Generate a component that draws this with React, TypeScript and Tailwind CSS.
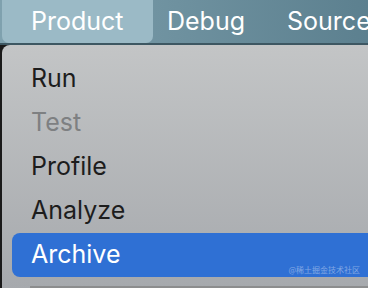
import React from 'react';

const items = [
  { label: 'Run', disabled: false },
  { label: 'Test', disabled: true },
  { label: 'Profile', disabled: false },
  { label: 'Analyze', disabled: false },
];

const App = () => {
  return (
    <div
      className="w-[368px] h-[288px] overflow-hidden bg-[#1a1a1a] flex flex-col"
      style={{ fontFamily: 'Inter, "Noto Sans", sans-serif' }}
    >
      {/* Menu bar */}
      <div className="h-[45px] shrink-0 flex items-start overflow-hidden bg-gradient-to-r from-[#7fa1ae] to-[#5c808f] text-white text-[25px] border-b-2 border-[#3d5762]">
        <div className="shrink-0 ml-[2px] w-[151px] h-[43px] pl-[29px] flex items-center rounded-b-[7px] bg-[#9bbac6]">
          Product
        </div>
        <div className="shrink-0 h-[43px] ml-[14px] flex items-center">Debug</div>
        <div className="shrink-0 h-[43px] ml-[42px] flex items-center whitespace-nowrap">Source</div>
      </div>

      {/* Dropdown */}
      <div className="relative flex-1 ml-[2px] rounded-tl-[8px] bg-gradient-to-b from-[#c3c5c6] to-[#a6a9ad] pt-[12px]">
        {items.map((item) => (
          <div
            key={item.label}
            className={`h-[44px] pl-[29px] flex items-center text-[25px] ${
              item.disabled ? 'text-[#7e8082]' : 'text-[#1d1d1d]'
            }`}
          >
            {item.label}
          </div>
        ))}
        <div className="h-[44px] ml-[10px] pl-[19px] flex items-center text-[25px] text-white bg-[#2f70d4] rounded-l-[8px]">
          Archive
        </div>
        <div className="ml-[28px] mt-[9px] h-[3px] bg-[#8c8d8e]" />
        <div
          className="absolute right-[8px] bottom-[15px] text-[8px] leading-none text-white/40"
          style={{ fontFamily: '"Noto Sans CJK SC", sans-serif' }}
        >
          @稀土掘金技术社区
        </div>
      </div>
    </div>
  );
};

export default App;
